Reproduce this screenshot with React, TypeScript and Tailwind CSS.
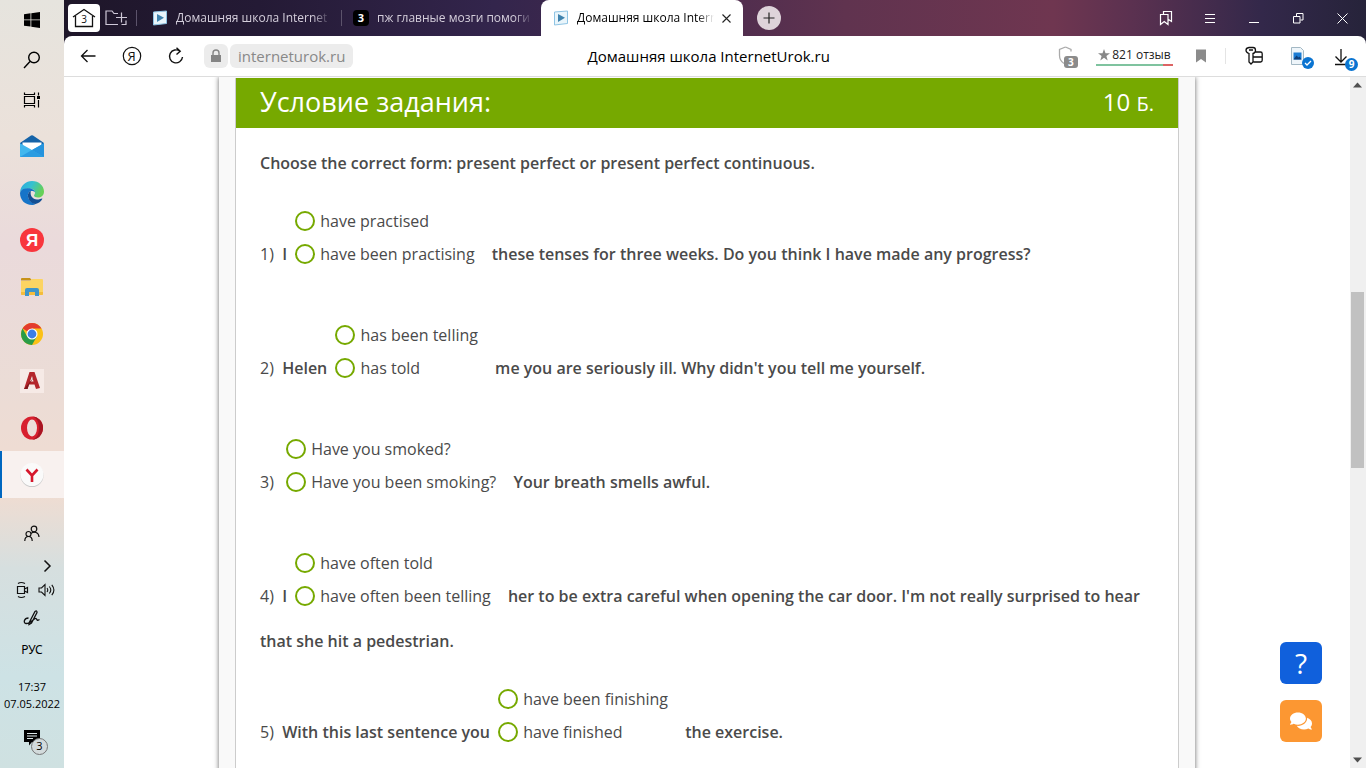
import { useState, type ReactNode } from 'react'
import clsx from 'clsx'
import { FaComments } from 'react-icons/fa'

type Question = {
  id: number
  before: string
  options: string[]
  after: string
}

const questions: Question[] = [
  {
    id: 1,
    before: 'I ',
    options: ['have practised', 'have been practising'],
    after: 'these tenses for three weeks. Do you think I have made any progress?',
  },
  {
    id: 2,
    before: 'Helen ',
    options: ['has been telling', 'has told'],
    after: "me you are seriously ill. Why didn't you tell me yourself.",
  },
  {
    id: 3,
    before: '',
    options: ['Have you smoked?', 'Have you been smoking?'],
    after: 'Your breath smells awful.',
  },
  {
    id: 4,
    before: 'I ',
    options: ['have often told', 'have often been telling'],
    after:
      "her to be extra careful when opening the car door. I'm not really surprised to hear that she hit a pedestrian.",
  },
  {
    id: 5,
    before: 'With this last sentence you ',
    options: ['have been finishing', 'have finished'],
    after: 'the exercise.',
  },
]

/* ---------- Taskbar icons ---------- */

const WindowsIcon = () => (
  <svg width="16" height="16" viewBox="0 0 16 16" fill="#000">
    <path d="M0 2.2 6.5 1.3v6.2H0zM7.3 1.2 16 0v7.5H7.3zM0 8.3h6.5v6.3L0 13.7zM7.3 8.3H16V16l-8.7-1.2z" />
  </svg>
)

const SearchIcon = () => (
  <svg width="18" height="18" viewBox="0 0 18 18" fill="none" stroke="#000" strokeWidth="1.4">
    <circle cx="11" cy="6.5" r="5.3" />
    <path d="M7 10.5 1 17" />
  </svg>
)

const TaskViewIcon = () => (
  <svg width="18" height="16" viewBox="0 0 18 16" fill="none" stroke="#000" strokeWidth="1.2">
    <path d="M1.5 4.5h10v7h-10zM1.5.5v2h10v-2M1.5 15.500v-2h10v2M15.500.500v3M15.500 8v7.500" />
    <path d="M14 4h3v3h-3z" fill="#000" stroke="none" />
  </svg>
)

const MailIcon = () => (
  <svg width="24" height="24" viewBox="0 0 24 24">
    <path d="M0 9 11 1.500q1-.7 2 0L24 9v2H0z" fill="#1563a8" />
    <path d="M2.500 8.500h19v8h-19z" fill="#fff" />
    <path d="M0 9.200 12 16l12-6.800V23H0z" fill="#41b7ee" />
    <path d="M24 9.200V23L12 16z" fill="#2593dd" />
    <path d="M0 23 12 16l12 7z" fill="#1b8bd8" opacity=".6" />
  </svg>
)

const EdgeIcon = () => (
  <svg width="24" height="24" viewBox="0 0 24 24">
    <defs>
      <linearGradient id="edge-top" x1="0" x2="1" y1="0" y2=".4">
        <stop offset="0" stopColor="#2aa7e0" />
        <stop offset=".5" stopColor="#35c1d0" />
        <stop offset="1" stopColor="#66d058" />
      </linearGradient>
    </defs>
    <path d="M0 11C1 4 6 0 12 0c7 0 12 5 12 10.500 0 4-3 6-6 6-2.500 0-4-1-4-2 0-.7 1-1 1-2.800C15 9 12.500 7.500 9 7.500 5 7.500 1.500 9 0 11z" fill="url(#edge-top)" />
    <path d="M0 12C1 8 5 7.300 8.500 7.300c3.500 0 6.200 1.700 6.500 4-1-1-2-1.300-3-1.300-3 0-4.500 2.500-4 5.500.6 4 4 6.500 7.500 7.500-1 .6-2 1-3.500 1C5 24 0 19 0 12z" fill="#1674c8" />
    <path d="M8 15.500c-.4-3 1-5 3-5.500-1.500 4 1.500 8.500 6 8.500 2.500 0 4-.7 5-1 .4 0 .5.300.300.600C21 20.500 18.500 22.500 15.500 23 11.500 22.500 8.500 19.500 8 15.500z" fill="#134f94" />
  </svg>
)

const YandexIcon = () => (
  <svg width="24" height="24" viewBox="0 0 24 24">
    <circle cx="12" cy="12" r="12" fill="#f8363d" />
    <text x="12" y="18" textAnchor="middle" fontSize="17" fontWeight="700" fill="#fff" fontFamily="Liberation Sans, sans-serif">Я</text>
  </svg>
)

const FolderIcon = () => (
  <svg width="24" height="24" viewBox="0 0 24 24">
    <path d="M1 4q0-1 1-1h8l2 2.500H1z" fill="#c79218" />
    <path d="M1 6h9l2-2h10q1 0 1 1v14q0 1-1 1H2q-1 0-1-1z" fill="#fcd462" />
    <path d="M1 17h22v2q0 1-1 1H2q-1 0-1-1z" fill="#f4bd3c" />
    <path d="M5 21v-6q0-2 2-2h10q2 0 2 2v6h-4v-4H9v4z" fill="#3f95c9" />
  </svg>
)

const ChromeIcon = () => (
  <svg width="24" height="24" viewBox="0 0 24 24">
    <circle cx="12" cy="12" r="11" fill="#fbc116" />
    <path d="M12 12 2.500 6.500A11 11 0 0 1 21.500 6.500H12z" fill="#e33b2e" />
    <path d="M2.500 6.500A11 11 0 0 0 12 23l4.800-8.500L12 12 7.200 14.500z" fill="#2a9c48" />
    <circle cx="12" cy="12" r="5.500" fill="#fff" />
    <circle cx="12" cy="12" r="4.400" fill="#3b7de8" />
  </svg>
)

const AutocadIcon = () => (
  <svg width="24" height="24" viewBox="0 0 24 24">
    <path d="M0 0h24v24H0z" fill="#f6eae6" />
    <path d="M4 20 9.500 3h5L20 19l-4 1-1.500-4.500H9L7.500 20z" fill="#b4262b" />
    <path d="m10 12.500 2-5.500 1.500 5.500z" fill="#f6eae6" />
    <path d="M4 20 14 8l-5 7.500L7.500 20z" fill="#7e171c" />
  </svg>
)

const OperaIcon = () => (
  <svg width="24" height="24" viewBox="0 0 24 24">
    <ellipse cx="12" cy="12" rx="11" ry="11.500" fill="#d71f2e" />
    <path d="M12 .5A11 11.500 0 0 1 12 23.500c5-1 7-6 7-11.500S17 1.500 12 .5z" fill="#a81523" />
    <ellipse cx="12" cy="12" rx="5" ry="8.500" fill="#ecdeda" />
  </svg>
)

const YBrowserIcon = () => (
  <svg width="24" height="24" viewBox="0 0 24 24">
    <circle cx="12" cy="12.500" r="11.500" fill="#c9c9c9" />
    <circle cx="12" cy="11.500" r="11.500" fill="#fafafa" />
    <path d="m6.500 6.500 5.500 6 5.500-6M12 12v7" fill="none" stroke="#d6172c" strokeWidth="2.600" />
  </svg>
)

const PeopleIcon = () => (
  <svg width="16" height="18" viewBox="0 0 16 18" fill="none" stroke="#111" strokeWidth="1.200">
    <circle cx="10" cy="4" r="2.800" />
    <circle cx="4.500" cy="9" r="2.500" />
    <path d="M.8 16c0-6 7.400-6 7.400 0M7 8.500c3-3 8-1 8 3.500" />
  </svg>
)

const CameraIcon = () => (
  <svg width="14" height="18" viewBox="0 0 14 18" fill="none" stroke="#111" strokeWidth="1.200">
    <path d="M1.500 5.500h7v7h-7zM8.500 8l3-1.500v5l-3-1.500M2 2.500q3-2 7 0M2 15.500q3 2 7 0" />
  </svg>
)

const SpeakerIcon = () => (
  <svg width="18" height="14" viewBox="0 0 18 14" fill="none" stroke="#111" strokeWidth="1.100">
    <path d="M1 5h2.500l3.500-3.500v11L3.500 9H1zM9 5q1.500 2 0 4M11.300 3.500q3 3.500 0 7M13.800 1.800q4.200 5.200 0 10.400" />
  </svg>
)

const PenIcon = () => (
  <svg width="18" height="18" viewBox="0 0 18 18" fill="none" stroke="#111" strokeWidth="1.300">
    <path d="M6 14 12 2.500q2-1.500 2 1L8.500 14 6 15.500zM5.500 9C1 9 0 14 3 14.500c4 .5 8-5.500 10-5 1.500.5 0 3 3.500 1" />
  </svg>
)

/* ---------- Browser icons ---------- */

const PlayFavicon = () => (
  <svg width="16" height="16" viewBox="0 0 16 16" className="shrink-0">
    <path d="m1.500 2 13-1v12.500l-13 1.500z" fill="#e9f5fb" stroke="#8fc4e4" />
    <path d="M5 4v8l7-4.300z" fill="#3f83ae" />
  </svg>
)

const ShieldIcon = () => (
  <svg width="16" height="20" viewBox="0 0 16 20" fill="none" stroke="#aaa" strokeWidth="1.300">
    <path d="M7.500 1 13 3.500v2M7.500 1 1.500 3.500v6q0 5 4.500 8" />
  </svg>
)

const KeyIcon = () => (
  <svg width="20" height="20" viewBox="0 0 20 20" fill="none" stroke="#111" strokeWidth="1.300">
    <path d="M5 1.500h4q2.500 0 2.500 2.700T9 7.500V16l-2 2-2-2V7.500Q2 6.500 2 4.200t3-2.700zM5 4h4M11.500 6h5q1.700 0 1.700 1.700v6.600q0 1.700-1.700 1.700H9.500M9.500 11h8.500" />
  </svg>
)

const taskbarApps = [
  { name: 'Почта', icon: <MailIcon /> },
  { name: 'Edge', icon: <EdgeIcon /> },
  { name: 'Яндекс', icon: <YandexIcon /> },
  { name: 'Проводник', icon: <FolderIcon /> },
  { name: 'Chrome', icon: <ChromeIcon /> },
  { name: 'AutoCAD', icon: <AutocadIcon /> },
  { name: 'Opera', icon: <OperaIcon /> },
  { name: 'Яндекс.Браузер', icon: <YBrowserIcon />, active: true },
]

function IconButton({ label, className, children }: { label: string; className?: string; children: ReactNode }) {
  return (
    <button type="button" aria-label={label} className={clsx('flex shrink-0 items-center justify-center', className)}>
      {children}
    </button>
  )
}

function Taskbar() {
  return (
    <aside className="flex w-16 shrink-0 flex-col bg-[linear-gradient(180deg,#e6e4de_0%,#ebe1da_18%,#eadadb_32%,#ebdcd6_50%,#f0dcd1_64%,#d6dfdf_74%,#cde2e5_88%,#cfe1e1_100%)] text-black">
      <IconButton label="Пуск" className="h-10"><WindowsIcon /></IconButton>
      <IconButton label="Поиск" className="h-10"><SearchIcon /></IconButton>
      <IconButton label="Представление задач" className="mb-[2px] h-10"><TaskViewIcon /></IconButton>
      {taskbarApps.map((app) => (
        <IconButton
          key={app.name}
          label={app.name}
          className={clsx('h-[47px]', app.active && 'border-l-2 border-[#0067c0] bg-[#f8f1ef] pr-[2px]')}
        >
          {app.icon}
        </IconButton>
      ))}

      <div className="mt-auto flex flex-col items-center text-xs">
        <IconButton label="Люди" className="h-8"><PeopleIcon /></IconButton>
        <IconButton label="Скрытые значки" className="mt-1 h-6 self-end pr-3">
          <svg width="9" height="14" viewBox="0 0 9 14" fill="none" stroke="#111" strokeWidth="1.500">
            <path d="m1.500 1.500 5.500 5.500-5.500 5.500" />
          </svg>
        </IconButton>
        <div className="flex h-6 items-center gap-2 pl-2">
          <IconButton label="Камера"><CameraIcon /></IconButton>
          <IconButton label="Громкость"><SpeakerIcon /></IconButton>
        </div>
        <IconButton label="Перо" className="h-8"><PenIcon /></IconButton>
        <button type="button" className="h-8 font-['Noto_Sans']">РУС</button>
        <div className="mt-3 text-center text-[11px] leading-[17px]">
          <div>17:37</div>
          <div>07.05.2022</div>
        </div>
        <button type="button" aria-label="Уведомления" className="relative mt-2 flex h-12 w-full items-center justify-center pb-3">
          <svg width="16" height="16" viewBox="0 0 16 16">
            <path d="M0 0h16v12H8l-3 3.500V12H0z" fill="#000" />
            <path d="M3 3.500h10M3 6h10M3 8.500h6" stroke="#dbe6e8" />
          </svg>
          <span className="absolute left-[31px] top-[18px] flex size-[17px] items-center justify-center rounded-full border border-[#777] bg-[#d3dbdc] text-[11px]">
            3
          </span>
        </button>
      </div>
    </aside>
  )
}

function TabTitle({ children }: { children: ReactNode }) {
  return (
    <span className="min-w-0 flex-1 overflow-hidden whitespace-nowrap text-left [mask-image:linear-gradient(90deg,#000_88%,transparent)]">
      {children}
    </span>
  )
}

function TabBar() {
  return (
    <header className="flex h-9 shrink-0 items-center text-xs text-[#d4cedb]">
      <button type="button" aria-label="Домой" className="ml-1 flex h-7 w-8 items-center justify-center rounded bg-white">
        <svg width="24" height="20" viewBox="0 0 24 20" fill="none" stroke="#111" strokeWidth="1.300">
          <path d="M3.500 8v10.500h17V8M1 9 12 1.500 23 9" />
          <text x="12" y="15" textAnchor="middle" fontSize="10" fill="#111" stroke="none">3</text>
        </svg>
      </button>
      <IconButton label="Новая группа" className="ml-1 w-6">
        <svg width="22" height="18" viewBox="0 0 22 18" fill="none" stroke="#cfc8d8" strokeWidth="1.200">
          <path d="M13 15.500H1V2h6l2 2.500h4M16.500 3.500v10M11 8.500h11M16.500 15.500h4.500v-4" />
        </svg>
      </IconButton>
      <div className="ml-2 h-4 w-px bg-[#5c536b]" />
      <button type="button" className="flex w-[204px] items-center gap-2 pl-[15px] pr-[10px]">
        <PlayFavicon />
        <TabTitle>Домашняя школа Internet</TabTitle>
      </button>
      <div className="h-4 w-px bg-[#5c536b]" />
      <button type="button" className="flex w-[199px] items-center gap-2 pl-[11px] pr-2">
        <span className="flex h-4 w-4 shrink-0 items-center justify-center rounded-sm bg-black text-[11px] font-bold text-white">3</span>
        <TabTitle>пж главные мозги помоги</TabTitle>
      </button>
      <div className="flex h-9 w-[202px] items-center gap-2 rounded-t-lg bg-white px-3 text-black">
        <PlayFavicon />
        <TabTitle>Домашняя школа Intern</TabTitle>
        <IconButton label="Закрыть вкладку">
          <svg width="9" height="9" viewBox="0 0 9 9" stroke="#222" strokeWidth="1.100">
            <path d="m.5.500 8 8M8.500.500l-8 8" />
          </svg>
        </IconButton>
      </div>
      <IconButton label="Новая вкладка" className="ml-[14px] size-6 rounded-full bg-[#ded3da]">
        <svg width="12" height="12" viewBox="0 0 12 12" stroke="#222" strokeWidth="1.200">
          <path d="M6 .5v11M.5 6h11" />
        </svg>
      </IconButton>

      <div className="ml-auto mr-[2px] flex items-center">
        <IconButton label="Коллекции" className="w-11">
          <svg width="14" height="16" viewBox="0 0 14 16" fill="none" stroke="#fff" strokeWidth="1.200">
            <path d="M1.500 4.500h7.500v10L5.200 11.500 1.500 14.500zM4.500 4V1.500h8v10L9.500 9.500" />
          </svg>
        </IconButton>
        <IconButton label="Меню" className="w-11">
          <svg width="10" height="11" viewBox="0 0 10 11" stroke="#fff">
            <path d="M0 1.500h10M0 5.500h10M0 9.500h10" />
          </svg>
        </IconButton>
        <IconButton label="Свернуть" className="w-11">
          <svg width="10" height="11" viewBox="0 0 10 11" stroke="#fff">
            <path d="M0 9.500h10" />
          </svg>
        </IconButton>
        <IconButton label="Свернуть в окно" className="w-11">
          <svg width="11" height="11" viewBox="0 0 11 11" fill="none" stroke="#fff">
            <path d="M.5 3.500h6.500v6.500H.5zM3.500 3V.5h6.500v6.500H7.500" />
          </svg>
        </IconButton>
        <IconButton label="Закрыть" className="w-11">
          <svg width="11" height="11" viewBox="0 0 11 11" stroke="#fff">
            <path d="m.5.500 10 10M10.500.500l-10 10" />
          </svg>
        </IconButton>
      </div>
    </header>
  )
}

function Toolbar() {
  return (
    <div className="flex h-[41px] shrink-0 items-center rounded-t-lg border-b border-[#ddd] bg-white text-[#111]">
      <IconButton label="Назад" className="ml-[2px] w-11">
        <svg width="16" height="14" viewBox="0 0 16 14" fill="none" stroke="#111" strokeWidth="1.300">
          <path d="M15.500 7H1.500M7.500 1l-6 6 6 6" />
        </svg>
      </IconButton>
      <IconButton label="Яндекс" className="w-11">
        <svg width="20" height="20" viewBox="0 0 20 20">
          <circle cx="10" cy="10" r="8.700" fill="none" stroke="#111" strokeWidth="1.200" />
          <text x="9.700" y="14.500" textAnchor="middle" fontSize="13" fill="#111">Я</text>
        </svg>
      </IconButton>
      <IconButton label="Обновить" className="w-11">
        <svg width="16" height="18" viewBox="0 0 16 18" fill="none" stroke="#111" strokeWidth="1.400">
          <path d="M12 4.200A6.500 6.500 0 1 0 14.500 10M8.500.800 12.200 4.200 8.500 7.500" />
        </svg>
      </IconButton>
      <IconButton label="Защищённое соединение" className="ml-[6px] h-6 w-6 rounded-md bg-[#ececec]">
        <svg width="12" height="14" viewBox="0 0 12 14">
          <path d="M1 6h10v7H1z" fill="#858585" />
          <path d="M3 6V4q0-3 3-3t3 3v2" fill="none" stroke="#858585" strokeWidth="1.400" />
        </svg>
      </IconButton>
      <button type="button" className="ml-[2px] h-6 rounded-md bg-[#ececec] px-2 text-[15px] leading-6 text-[#888]">
        interneturok.ru
      </button>
      <h1 className="min-w-0 flex-1 truncate pl-[6px] text-center text-[15px] text-black">Домашняя школа InternetUrok.ru</h1>

      <button type="button" aria-label="Защита" className="relative mr-[14px] h-6 w-6">
        <ShieldIcon />
        <span className="absolute bottom-0 left-[6px] rounded-[3px] bg-[#8b8b8b] px-1 text-[10px] font-bold leading-3 text-white">3</span>
      </button>
      <a href="#reviews" className="flex w-[77px] flex-col text-xs leading-[18px] text-[#222]">
        <span className="flex items-center justify-center gap-[2px] whitespace-nowrap">
          <svg width="12" height="12" viewBox="0 0 12 12" fill="#888">
            <path d="m6 0 1.500 4.300H12L8.400 7l1.300 4.500L6 8.800l-3.700 2.700L3.600 7 0 4.300h4.500z" />
          </svg>
          821 отзыв
        </span>
        <span className="flex h-[2px]">
          <span className="flex-1 bg-[#7fc39f]" />
          <span className="w-[10px] bg-[#dc6464]" />
        </span>
      </a>
      <IconButton label="Закладка" className="ml-4 w-6">
        <svg width="10" height="14" viewBox="0 0 10 14">
          <path d="M0 .500h10v13L5 10l-5 3.500z" fill="#8b8b8b" />
        </svg>
      </IconButton>
      <div className="ml-3 h-4 w-px bg-[#e4e4e4]" />
      <IconButton label="Пароли" className="ml-4 w-6"><KeyIcon /></IconButton>
      <button type="button" aria-label="Файл загружен" className="relative ml-6 h-6 w-6">
        <svg width="24" height="25" viewBox="0 0 24 25">
          <path d="M1.500 3.500h9l3 3v14h-12z" fill="#eef5fa" stroke="#a3b8c4" />
          <path d="M3.500 8.500h8v7h-8z" fill="#1b7cd4" />
          <path d="m3.500 15.500 3-4 2 2 1-1 2 3z" fill="#0e3f7a" />
          <circle cx="18" cy="19" r="6" fill="#0a74d1" />
          <path d="m15 19 2 2 4-4" fill="none" stroke="#fff" strokeWidth="1.300" />
        </svg>
      </button>
      <button type="button" aria-label="Загрузки" className="relative ml-5 mr-2 h-6 w-6">
        <svg width="14" height="18" viewBox="0 0 14 18" fill="none" stroke="#111" strokeWidth="1.300" className="mt-[2px]">
          <path d="M7 1v13M1.500 8.500 7 14l5.500-5.500M1 16.500h11" />
        </svg>
        <span className="absolute -bottom-[3px] right-0 flex size-[13px] items-center justify-center rounded-full bg-[#0a74d1] text-[10px] font-bold text-white">9</span>
      </button>
    </div>
  )
}

function QuestionItem({ question }: { question: Question }) {
  const [answer, setAnswer] = useState('')

  return (
    <li className={clsx('font-semibold leading-[45px]', question.id === 4 ? 'mb-[19px]' : 'mb-[42px]')}>
      <span className="font-normal">{question.id})&nbsp;&nbsp;</span>
      {question.before}
      <span className="ml-1 mr-[13px] inline-block font-normal leading-[33px]" role="radiogroup">
        {question.options.map((option) => (
          <label key={option} className="block">
            <input
              type="radio"
              name={`question-${question.id}`}
              value={option}
              checked={answer === option}
              onChange={() => setAnswer(option)}
              className="mb-[3px] mr-[5px] size-5 appearance-none rounded-full border-2 border-[#76a900] bg-white align-middle checked:border-[6px]"
            />
            {option}
          </label>
        ))}
      </span>{' '}
      {question.after}
    </li>
  )
}

function Scrollbar() {
  return (
    <div className="flex w-4 shrink-0 flex-col items-center bg-[#f0f0f0] pr-px" aria-hidden="true">
      <svg width="9" height="17" viewBox="0 0 9 17"><path d="m0 10.500 4.500-5 4.500 5z" fill="#505050" /></svg>
      <div className="grow-[198]" />
      <div className="w-[13px] grow-[176] bg-[#c1c1c1]" />
      <div className="grow-[283]" />
      <svg width="9" height="17" viewBox="0 0 9 17"><path d="m0 6.500 4.500 5 4.500-5z" fill="#505050" /></svg>
    </div>
  )
}

export default function App() {
  return (
    <div className="flex h-screen overflow-hidden font-['Open_Sans',sans-serif]">
      <Taskbar />
      <div className="flex min-w-0 flex-1 flex-col bg-[linear-gradient(90deg,#1e1629_0%,#241a35_15%,#33254c_33%,#4a2b4e_48%,#60334f_60%,#6f3650_76%,#5b3150_82%,#33284a_92%,#26233a_100%)] bg-[length:100%_44px] bg-no-repeat">
        <TabBar />
        <Toolbar />

        <div className="relative flex min-h-0 flex-1 bg-white">
          <main className="min-w-0 flex-1 overflow-hidden">
            <div className="mx-auto min-h-full max-w-[976px] bg-[#f9f9f9] px-4 pt-px shadow-[0_0_5px_rgba(0,0,0,0.6)]">
              <section className="border-x border-[#ccc] bg-white text-base text-[#4a4a4a]">
                <div className="flex h-[50px] items-center justify-between bg-[#76a900] px-6 pb-[2px] text-white">
                  <h2 className="text-[27px]">Условие задания:</h2>
                  <span className="text-2xl">
                    10 <span className="text-xl">Б.</span>
                  </span>
                </div>
                <div className="px-6 pb-10 pt-[23px]">
                  <p className="font-semibold">Choose the correct form: present perfect or present perfect continuous.</p>
                  <ol className="mt-[30px]">
                    {questions.map((question) => (
                      <QuestionItem key={question.id} question={question} />
                    ))}
                  </ol>
                </div>
              </section>
            </div>
          </main>
          <Scrollbar />

          {/* Support buttons over the page */}
          <div className="absolute bottom-[26px] right-[44px] flex flex-col gap-4">
            <IconButton label="Помощь" className="size-[42px] rounded-md bg-[#1060dc] text-[28px] font-medium text-white">?</IconButton>
            <IconButton label="Чат" className="size-[42px] rounded-md bg-[#fc9732] text-white">
              <FaComments size={22} />
            </IconButton>
          </div>
        </div>
      </div>
    </div>
  )
}
